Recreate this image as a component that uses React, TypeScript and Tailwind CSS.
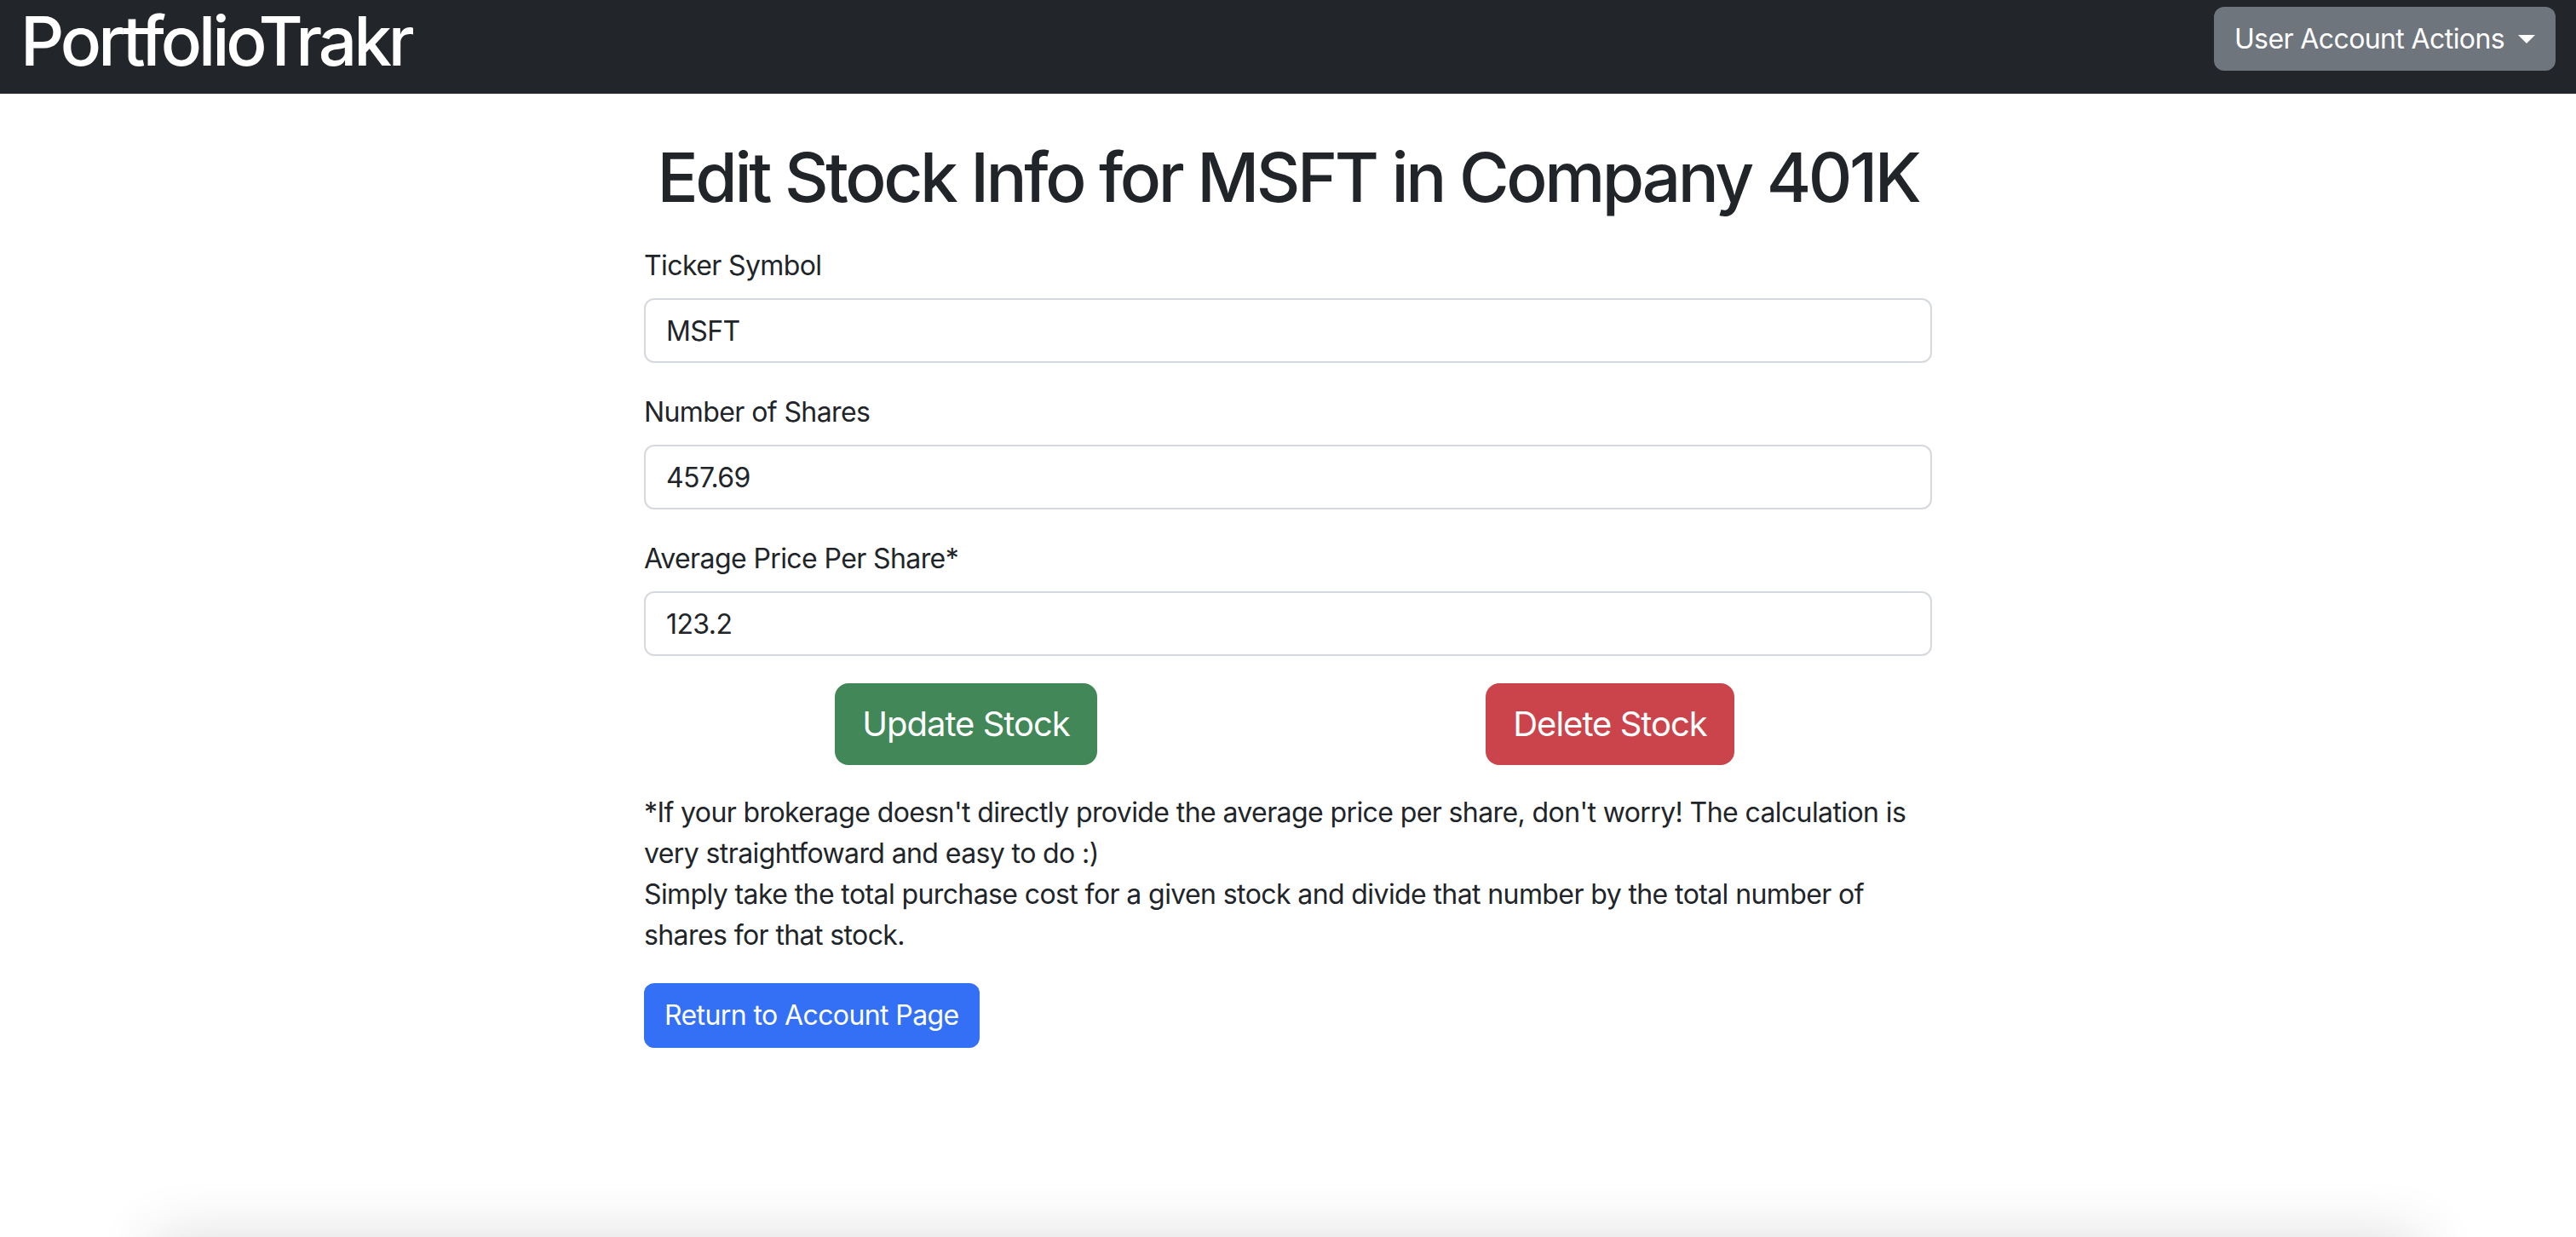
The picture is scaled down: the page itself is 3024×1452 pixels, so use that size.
import { useState } from 'react';

interface FieldProps {
  label: string;
  value: string;
}

const Field = ({ label, value }: FieldProps) => {
  const [val, setVal] = useState(value);

  return (
    <div className="mb-[34px]">
      <label className="block mb-[14px] text-[32px] leading-[48px]">{label}</label>
      <input
        type="text"
        value={val}
        onChange={(e) => setVal(e.target.value)}
        className="block w-full h-[76px] px-6 rounded-[12px] border-2 border-[#d5d9dd] bg-white text-[32px] tracking-[-0.6px] text-[#212529] outline-none"
      />
    </div>
  );
};

export default function App() {
  return (
    <div className="h-[1452px] overflow-hidden bg-white text-[#212529] tracking-[-0.6px] font-[Inter,'Liberation_Sans',sans-serif]">
      {/* Navbar */}
      <nav className="h-[110px] bg-[#222529] flex items-start justify-between px-6 pt-2">
        <a href="#" className="text-white text-[80px] leading-[80px] font-medium tracking-[-4px]">
          PortfolioTrakr
        </a>
        <button className="h-[75px] px-6 rounded-[12px] bg-[#6f757c] text-white text-[32px] flex items-center gap-4">
          User Account Actions
          <span className="w-0 h-0 border-t-[10px] border-t-white border-x-[10px] border-x-transparent" />
        </button>
      </nav>

      {/* Page */}
      <main className="h-[1342px] pt-[50px]">
        <h1 className="text-center text-[80px] leading-[96px] font-medium tracking-[-3.4px] mb-8">
          Edit Stock Info for MSFT in Company 401K
        </h1>

        <div className="w-1/2 mx-auto">
          <Field label="Ticker Symbol" value="MSFT" />
          <Field label="Number of Shares" value="457.69" />
          <Field label="Average Price Per Share*" value="123.2" />

          {/* Actions */}
          <div className="grid grid-cols-2 -mt-[2px] mb-8">
            <div className="flex justify-center">
              <button className="h-[96px] px-8 rounded-[16px] bg-[#418757] text-white text-[40px] tracking-[-1px]">
                Update Stock
              </button>
            </div>
            <div className="flex justify-center">
              <button className="h-[96px] px-8 rounded-[16px] bg-[#cb444b] text-white text-[40px] tracking-[-1px]">
                Delete Stock
              </button>
            </div>
          </div>

          <p className="text-[32px] leading-[48px] mb-8">
            *If your brokerage doesn't directly provide the average price per share, don't worry! The calculation is
            very straightfoward and easy to do :)
            <br />
            Simply take the total purchase cost for a given stock and divide that number by the total number of
            shares for that stock.
          </p>

          <button className="h-[76px] px-6 rounded-[12px] bg-[#3470f5] text-white text-[32px]">
            Return to Account Page
          </button>
        </div>
      </main>

      {/* Footer edge just below the fold */}
      <div className="mx-[180px] h-[200px] bg-white shadow-[0_0_70px_rgba(0,0,0,0.14)]" />
    </div>
  );
}
